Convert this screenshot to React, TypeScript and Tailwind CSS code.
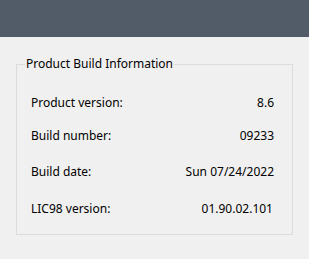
const rows: { label: string; value: string; gap: string; pad: string }[] = [
  { label: "Product version:", value: "8.6", gap: "mt-[23px]", pad: "pr-[18px]" },
  { label: "Build number:", value: "09233", gap: "mt-[17px]", pad: "pr-[18px]" },
  { label: "Build date:", value: "Sun 07/24/2022", gap: "mt-[20px]", pad: "pr-[18px]" },
  { label: "LIC98 version:", value: "01.90.02.101", gap: "mt-[21px]", pad: "pr-[19px]" },
];

export default function App() {
  return (
    <div className="h-[259px] w-[309px] bg-[#f0f0f0] font-['Noto_Sans','DejaVu_Sans',sans-serif] text-[12px] text-black">
      <div className="h-[37px] bg-[#525c69]" />
      <fieldset className="mx-[16px] mt-[19px] h-[179px] border border-[#dcdcdc]">
        <legend className="ml-[8px] px-[1px] leading-[16px]">Product Build Information</legend>
        {rows.map((row) => (
          <div
            key={row.label}
            className={`flex h-[16px] items-center justify-between pl-[14px] leading-[16px] ${row.gap} ${row.pad}`}
          >
            <span>{row.label}</span>
            <span>{row.value}</span>
          </div>
        ))}
      </fieldset>
    </div>
  );
}
